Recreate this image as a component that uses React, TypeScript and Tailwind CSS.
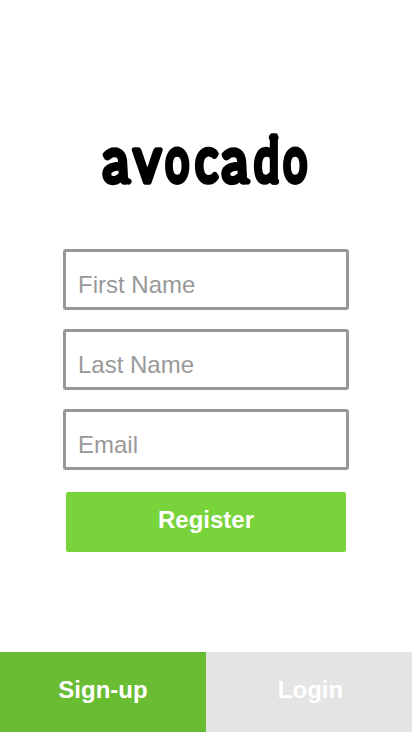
import React from "react";

// Letters of the wordmark, each with its left edge, horizontal scale and slant.
const letters = [
  { char: "a", x: 103.3, scale: 0.85, skew: 3 },
  { char: "v", x: 133.6, scale: 0.86, skew: 0 },
  { char: "o", x: 165.3, scale: 0.68, skew: 0 },
  { char: "c", x: 195, scale: 0.78, skew: 0 },
  { char: "a", x: 222.3, scale: 0.85, skew: 3 },
  { char: "d", x: 254, scale: 0.72, skew: 0 },
  { char: "o", x: 283.3, scale: 0.68, skew: 0 },
];

function Wordmark() {
  return (
    <svg role="img" aria-label="avocado" width="412" height="100" viewBox="0 110 412 100">
      {letters.map(({ char, x, scale, skew }, index) => (
        <text
          key={index}
          transform={`translate(${x} 181.8) skewX(${skew}) scale(${scale} 1)`}
          className="fill-black stroke-black stroke-[5px] font-['Lato',sans-serif] text-[62px] font-normal [vector-effect:non-scaling-stroke]"
          strokeLinejoin="round"
          strokeLinecap="round"
        >
          {char}
        </text>
      ))}
      <path d="M271.8 137.6h3.8M273 181.6h3.2" className="stroke-black stroke-[6px]" strokeLinecap="round" />
      <path d="M127 180.5l1.6 1M246 180.5l1.6 1" className="stroke-black stroke-[6px]" strokeLinecap="round" />
    </svg>
  );
}

function Field({ label }: { label: string }) {
  return (
    <input
      aria-label={label}
      placeholder={label}
      className="block h-[61px] w-[286px] rounded-[3px] border-3 border-[#979797] bg-white px-3 pt-[11px] text-[24px] text-[#999999] outline-none placeholder:text-[#999999] placeholder:opacity-100"
    />
  );
}

export default function App() {
  return (
    <main className="flex h-[732px] w-[412px] flex-col items-center overflow-hidden bg-white font-['Liberation_Sans',Arial,sans-serif]">
      <h1 className="mt-[110px] mb-[39px] h-[100px]">
        <Wordmark />
      </h1>
      <form className="flex flex-col items-center gap-[19px]">
        <Field label="First Name" />
        <Field label="Last Name" />
        <Field label="Email" />
        <button type="button" className="mt-[3px] h-[60px] w-[280px] rounded-[2px] bg-[#79d43b] pb-1 text-[24px] font-bold text-white">Register</button>
      </form>
      <nav className="mt-auto flex h-20 w-full text-[24px] font-bold text-white">
        <button className="w-[206px] bg-[#6abc33] pb-1">Sign-up</button>
        <button className="w-[206px] bg-[#e4e4e4] pb-1 pl-[3px]">Login</button>
      </nav>
    </main>
  );
}
